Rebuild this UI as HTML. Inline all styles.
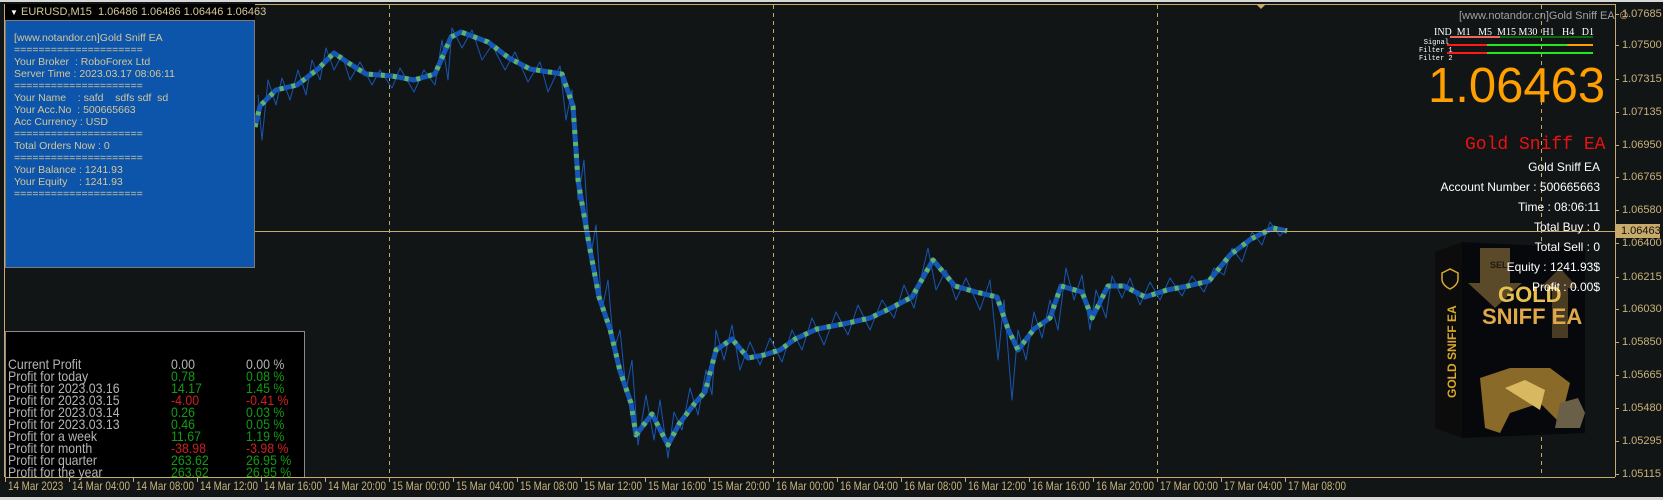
<!DOCTYPE html>
<html><head><meta charset="utf-8"><style>
*{margin:0;padding:0;box-sizing:border-box}
body{width:1663px;height:500px;background:#121516;overflow:hidden;position:relative;font-family:"Liberation Sans",Arial,sans-serif}
.abs{position:absolute;white-space:pre}
#info{position:absolute;left:5px;top:20px;width:250px;height:248px;background:#0d55aa;border:1px solid #7a7a7a;color:#d4c69a;font-size:10.5px;line-height:12px;padding:11px 0 0 8px;white-space:pre}
#prof{position:absolute;left:5px;top:331px;width:300px;height:146px;background:#000;border:1px solid #8a8a8a;border-bottom:none;font-size:14px;line-height:12px}
#prof .r{position:absolute;white-space:pre;transform:scaleX(0.88);transform-origin:0 0}
.g{color:#129c12}.rd{color:#cc2020}.gy{color:#b4b4b4}
.rt{position:absolute;right:63px;color:#fff;font-size:12px;white-space:pre;text-align:right}
.pl{position:absolute;left:1622px;color:#c8b27a;font-size:11px}
.tl{position:absolute;top:479px;color:#c8b27a;font-size:12px;white-space:pre;transform:scaleX(0.82);transform-origin:0 0}
</style></head><body>
<svg width="1663" height="500" style="position:absolute;left:0;top:0">
<rect x="0" y="0" width="1663" height="2" fill="#d8d8d8"/>
<rect x="0" y="497" width="1663" height="3" fill="#d8d8d8"/>
<line x1="5" y1="4.5" x2="1615" y2="4.5" stroke="#c8aa6a"/>
<line x1="1615.5" y1="4" x2="1615.5" y2="477" stroke="#c8aa6a"/>
<line x1="5" y1="477.5" x2="1615" y2="477.5" stroke="#c8aa6a"/>
<line x1="4.5" y1="4" x2="4.5" y2="477" stroke="#c8aa6a"/>
<g stroke="#c8aa6a" stroke-dasharray="4,4">
<line x1="389.5" y1="5" x2="389.5" y2="477"/><line x1="773.5" y1="5" x2="773.5" y2="477"/><line x1="1157.5" y1="5" x2="1157.5" y2="477"/><line x1="1541.5" y1="5" x2="1541.5" y2="477"/></g>
<polygon points="1257,5 1265,5 1261,9" fill="#c8aa6a"/>
<g fill="none" stroke-linejoin="round">
<polyline stroke="#1656b5" stroke-width="1" points="258,95 262,140 268,80 276,105 282,78 290,100 298,70 306,95 312,60 320,80 326,48 334,70 342,55 350,80 360,62 372,85 380,70 392,88 400,68 414,92 424,70 435,85 442,40 448,80 452,28 462,48 472,30 482,60 492,45 505,70 515,52 528,82 540,62 548,92 560,66 566,120 572,90 578,200 584,160 590,260 596,225 602,310 608,280 614,350 620,330 626,390 632,360 638,445 646,395 654,440 660,400 668,458 674,412 682,430 690,388 698,415 706,370 712,395 716,330 724,360 732,325 740,370 750,342 760,365 770,338 782,362 792,330 802,350 812,318 824,345 836,312 848,335 858,305 870,330 882,300 894,318 904,285 914,308 928,248 936,290 946,270 956,300 966,278 980,310 990,280 998,360 1004,300 1012,400 1018,330 1026,360 1034,312 1042,338 1050,300 1058,330 1066,268 1074,300 1082,275 1090,330 1096,290 1106,318 1112,276 1122,298 1130,278 1140,305 1150,282 1160,300 1170,278 1182,296 1192,276 1204,292 1214,268 1224,275 1232,248 1242,262 1252,232 1262,245 1270,222 1280,236 1287,228"/>
<polyline stroke="#1656b5" stroke-width="5" points="255,127 260,106 276,90 297,85 318,69 334,53 350,64 366,74 392,76 414,80 435,74 451,37 461,32 488,42 509,58 530,69 562,74 573,106 578,180 589,244 599,297 610,329 620,371 631,403 636,435 652,414 668,445 679,424 695,403 705,392 716,350 732,339 748,358 764,355 780,350 795,339 817,329 848,323 870,318 891,308 912,297 933,260 955,286 976,292 997,297 1008,329 1018,350 1034,329 1050,318 1061,286 1082,292 1092,318 1108,286 1124,286 1145,297 1167,290 1188,286 1209,281 1230,255 1251,239 1273,228 1287,231"/>
<polyline stroke="#5cb26e" stroke-width="5" stroke-dasharray="4,8" points="255,127 260,106 276,90 297,85 318,69 334,53 350,64 366,74 392,76 414,80 435,74 451,37 461,32 488,42 509,58 530,69 562,74 573,106 578,180 589,244 599,297 610,329 620,371 631,403 636,435 652,414 668,445 679,424 695,403 705,392 716,350 732,339 748,358 764,355 780,350 795,339 817,329 848,323 870,318 891,308 912,297 933,260 955,286 976,292 997,297 1008,329 1018,350 1034,329 1050,318 1061,286 1082,292 1092,318 1108,286 1124,286 1145,297 1167,290 1188,286 1209,281 1230,255 1251,239 1273,228 1287,231"/>
</g>
<line x1="5" y1="231.5" x2="1615" y2="231.5" stroke="#c8aa6a"/>
<g stroke="#c8aa6a">
<line x1="5.5" y1="477" x2="5.5" y2="482"/><line x1="69.5" y1="477" x2="69.5" y2="482"/><line x1="133.5" y1="477" x2="133.5" y2="482"/><line x1="197.5" y1="477" x2="197.5" y2="482"/><line x1="261.5" y1="477" x2="261.5" y2="482"/><line x1="325.5" y1="477" x2="325.5" y2="482"/><line x1="389.5" y1="477" x2="389.5" y2="482"/><line x1="453.5" y1="477" x2="453.5" y2="482"/><line x1="517.5" y1="477" x2="517.5" y2="482"/><line x1="581.5" y1="477" x2="581.5" y2="482"/><line x1="645.5" y1="477" x2="645.5" y2="482"/><line x1="709.5" y1="477" x2="709.5" y2="482"/><line x1="773.5" y1="477" x2="773.5" y2="482"/><line x1="837.5" y1="477" x2="837.5" y2="482"/><line x1="901.5" y1="477" x2="901.5" y2="482"/><line x1="965.5" y1="477" x2="965.5" y2="482"/><line x1="1029.5" y1="477" x2="1029.5" y2="482"/><line x1="1093.5" y1="477" x2="1093.5" y2="482"/><line x1="1157.5" y1="477" x2="1157.5" y2="482"/><line x1="1221.5" y1="477" x2="1221.5" y2="482"/><line x1="1285.5" y1="477" x2="1285.5" y2="482"/>
<line x1="1615" y1="14.5" x2="1619" y2="14.5"/><line x1="1615" y1="45.5" x2="1619" y2="45.5"/><line x1="1615" y1="79.5" x2="1619" y2="79.5"/><line x1="1615" y1="112.5" x2="1619" y2="112.5"/><line x1="1615" y1="145.5" x2="1619" y2="145.5"/><line x1="1615" y1="177.5" x2="1619" y2="177.5"/><line x1="1615" y1="210.5" x2="1619" y2="210.5"/><line x1="1615" y1="243.5" x2="1619" y2="243.5"/><line x1="1615" y1="277.5" x2="1619" y2="277.5"/><line x1="1615" y1="309.5" x2="1619" y2="309.5"/><line x1="1615" y1="342.5" x2="1619" y2="342.5"/><line x1="1615" y1="375.5" x2="1619" y2="375.5"/><line x1="1615" y1="408.5" x2="1619" y2="408.5"/><line x1="1615" y1="441.5" x2="1619" y2="441.5"/><line x1="1615" y1="474.5" x2="1619" y2="474.5"/>
</g>
</svg>
<div class="abs" style="left:5px;top:4px;width:250px;height:16px;background:#000;color:#d4c69a;font-size:11px;line-height:16px;padding-left:5px"><span style="color:#fff;font-size:8px">▼</span> EURUSD,M15  1.06486 1.06486 1.06446 1.06463</div>
<div id="info">[www.notandor.cn]Gold Sniff EA
=====================
Your Broker  : RoboForex Ltd
Server Time : 2023.03.17 08:06:11
=====================
Your Name    : safd    sdfs sdf  sd
Your Acc.No  : 500665663
Acc Currency : USD
=====================
Total Orders Now : 0
=====================
Your Balance : 1241.93
Your Equity    : 1241.93
=====================</div>
<div id="prof">
<div class="r gy" style="left:2px;top:26px">Current Profit<br>Profit for today<br>Profit for 2023.03.16<br>Profit for 2023.03.15<br>Profit for 2023.03.14<br>Profit for 2023.03.13<br>Profit for a week<br>Profit for month<br>Profit for quarter<br>Profit for the year</div>
<div class="r" style="left:165px;top:26px"><span class="gy">0.00</span><br><span class="g">0.78</span><br><span class="g">14.17</span><br><span class="rd">-4.00</span><br><span class="g">0.26</span><br><span class="g">0.46</span><br><span class="g">11.67</span><br><span class="rd">-38.98</span><br><span class="g">263.62</span><br><span class="g">263.62</span></div>
<div class="r" style="left:240px;top:26px"><span class="gy">0.00 %</span><br><span class="g">0.08 %</span><br><span class="g">1.45 %</span><br><span class="rd">-0.41 %</span><br><span class="g">0.03 %</span><br><span class="g">0.05 %</span><br><span class="g">1.19 %</span><br><span class="rd">-3.98 %</span><br><span class="g">26.95 %</span><br><span class="g">26.95 %</span></div>
</div>
<div class="abs" style="left:1459px;top:7px;color:#a0a0a0;font-size:11px">[www.notandor.cn]Gold Sniff EA <span style="color:#c8aa6a;font-size:13px">☺</span></div>
<div class="abs" style="left:1434px;top:27px;color:#fff;font-family:'Liberation Serif',serif;font-size:10px">IND  M1   M5  M15 M30  H1   H4   D1</div>
<svg width="1663" height="70" style="position:absolute;left:0;top:0">
<line x1="1450" y1="37" x2="1593" y2="37" stroke="#0a6a0a" stroke-width="2"/>
<line x1="1450" y1="37" x2="1500" y2="37" stroke="#e86a5a" stroke-width="2"/>
<line x1="1447" y1="45" x2="1487" y2="45" stroke="#ff1a1a" stroke-width="2"/>
<line x1="1487" y1="45" x2="1567" y2="45" stroke="#1eea1e" stroke-width="2"/>
<line x1="1567" y1="45" x2="1593" y2="45" stroke="#ffa000" stroke-width="2"/>
<line x1="1447" y1="53" x2="1487" y2="53" stroke="#ff1a1a" stroke-width="2"/>
<line x1="1487" y1="53" x2="1593" y2="53" stroke="#1eea1e" stroke-width="2"/>
</svg>
<div class="abs" style="left:1419px;top:39px;color:#fff;font-family:'Liberation Mono',monospace;font-size:7px;line-height:8px;text-align:right;width:30px">Signal<br>Filter 1<br>Filter 2</div>
<div class="abs" style="left:1428px;top:60px;color:#ffa000;font-size:49px;line-height:52px">1.06463</div>
<div class="abs" style="left:1465px;top:135px;color:#ee1010;font-family:'Liberation Mono',monospace;font-size:18px">Gold Sniff EA</div>
<svg width="180" height="220" style="position:absolute;left:1420px;top:228px">
<polygon points="15,24 42,14 42,210 15,200" fill="#0c0c0c"/>
<polygon points="42,14 165,20 165,205 42,210" fill="#06080c"/>
<polygon points="60,20 90,20 90,55 102,55 75,80 48,55 60,55" fill="#5a4a2a"/>
<polygon points="120,60 140,40 158,60 148,60 148,110 132,110 132,60" fill="#4a3c22"/>
<text x="70" y="40" fill="#201a10" font-size="9" font-weight="bold" font-family="Liberation Sans">SELL</text>
<text x="78" y="74" fill="#e8c050" font-size="22" font-weight="bold" font-family="Liberation Sans">GOLD</text>
<text x="62" y="96" fill="#e0a848" font-size="22" font-weight="bold" font-family="Liberation Sans">SNIFF EA</text>
<text transform="translate(36,170) rotate(-90)" fill="#d8a830" font-size="12" font-weight="bold" font-family="Liberation Sans">GOLD SNIFF EA</text>
<path d="M22,45 l8,-4 l8,4 v6 q0,6 -8,10 q-8,-4 -8,-10z" fill="none" stroke="#d8a830" stroke-width="1.5"/>
<path d="M60,150 l30,-10 l40,0 l20,15 l-10,40 l-20,-20 l-30,10 l-10,20 l-15,-5z" fill="#8a6a28"/>
<path d="M85,160 l20,-8 l20,10 l-5,20 z" fill="#d8b860"/>
<path d="M140,175 l18,-5 l7,15 l-5,15 l-25,0z" fill="#6a6048"/>
</svg>
<div class="rt" style="top:160px">Gold Sniff EA</div>
<div class="rt" style="top:180px">Account Number : 500665663</div>
<div class="rt" style="top:200px">Time : 08:06:11</div>
<div class="rt" style="top:220px">Total Buy : 0</div>
<div class="rt" style="top:240px">Total Sell : 0</div>
<div class="rt" style="top:260px">Equity : 1241.93$</div>
<div class="rt" style="top:280px">Profit : 0.00$</div>
<div class="pl" style="top:8px">1.07685</div>
<div class="pl" style="top:39px">1.07500</div>
<div class="pl" style="top:73px">1.07315</div>
<div class="pl" style="top:106px">1.07135</div>
<div class="pl" style="top:139px">1.06950</div>
<div class="pl" style="top:171px">1.06765</div>
<div class="pl" style="top:204px">1.06580</div>
<div class="pl" style="top:237px">1.06400</div>
<div class="pl" style="top:271px">1.06215</div>
<div class="pl" style="top:303px">1.06030</div>
<div class="pl" style="top:336px">1.05850</div>
<div class="pl" style="top:369px">1.05665</div>
<div class="pl" style="top:402px">1.05480</div>
<div class="pl" style="top:435px">1.05295</div>
<div class="pl" style="top:468px">1.05115</div>
<div class="abs" style="left:1616px;top:224px;width:44px;height:14px;background:#c8aa6a;color:#111;font-size:11px;line-height:14px;padding-left:5px">1.06463</div>
<div class="tl" style="left:8px">14 Mar 2023</div>
<div class="tl" style="left:72px">14 Mar 04:00</div>
<div class="tl" style="left:136px">14 Mar 08:00</div>
<div class="tl" style="left:200px">14 Mar 12:00</div>
<div class="tl" style="left:264px">14 Mar 16:00</div>
<div class="tl" style="left:328px">14 Mar 20:00</div>
<div class="tl" style="left:392px">15 Mar 00:00</div>
<div class="tl" style="left:456px">15 Mar 04:00</div>
<div class="tl" style="left:520px">15 Mar 08:00</div>
<div class="tl" style="left:584px">15 Mar 12:00</div>
<div class="tl" style="left:648px">15 Mar 16:00</div>
<div class="tl" style="left:712px">15 Mar 20:00</div>
<div class="tl" style="left:776px">16 Mar 00:00</div>
<div class="tl" style="left:840px">16 Mar 04:00</div>
<div class="tl" style="left:904px">16 Mar 08:00</div>
<div class="tl" style="left:968px">16 Mar 12:00</div>
<div class="tl" style="left:1032px">16 Mar 16:00</div>
<div class="tl" style="left:1096px">16 Mar 20:00</div>
<div class="tl" style="left:1160px">17 Mar 00:00</div>
<div class="tl" style="left:1224px">17 Mar 04:00</div>
<div class="tl" style="left:1288px">17 Mar 08:00</div>
</body></html>
